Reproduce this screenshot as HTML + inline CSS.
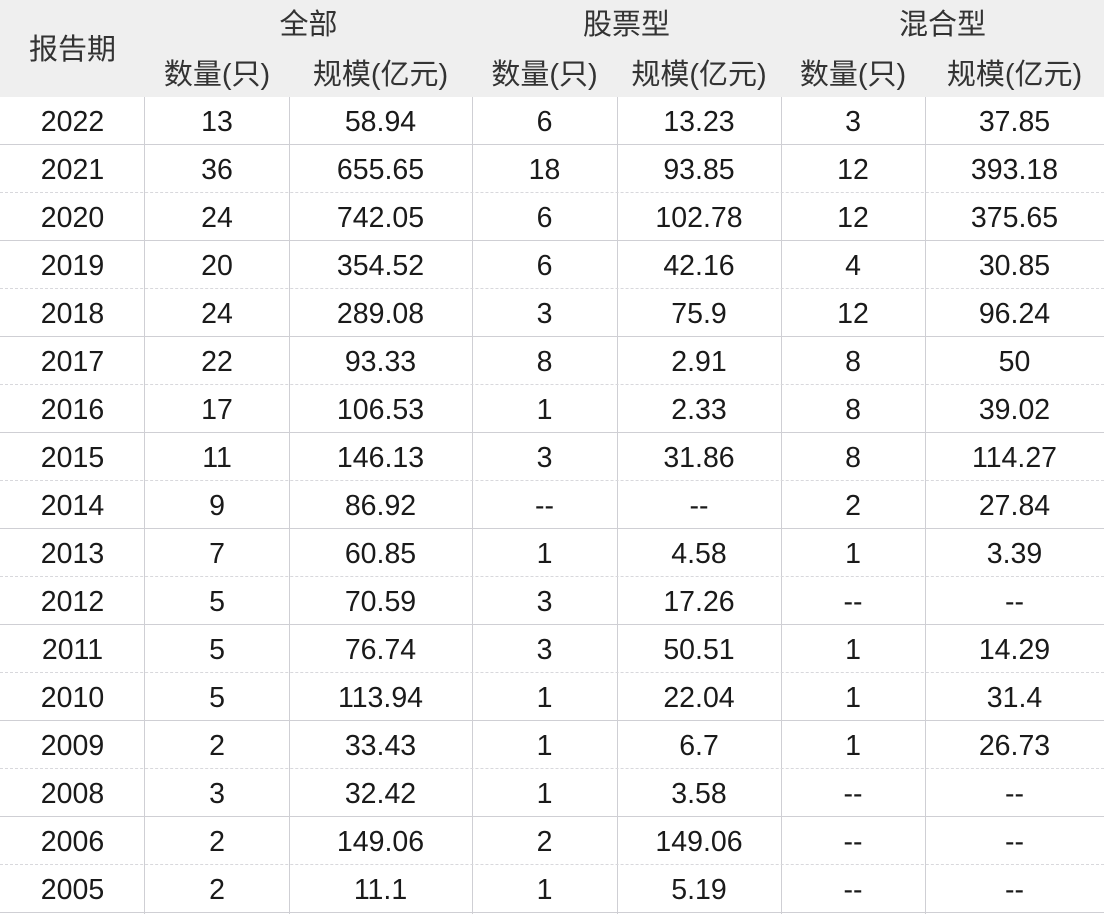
<!DOCTYPE html>
<html><head><meta charset="utf-8"><style>
body{margin:0;width:1104px;height:914px;overflow:hidden;background:#fff;font-family:"Liberation Sans","Noto Sans CJK SC",sans-serif;color:#1a1a1a}
.hdr{position:absolute;left:0;top:0;width:1104px;height:97px;background:#efefef}
.t{position:absolute;text-align:center;font-size:28.5px;line-height:48px;padding-top:1px}
.h{position:absolute;text-align:center;font-size:29px;line-height:40px;color:#333}
.vl{position:absolute;top:97px;width:1px;height:817px;background:#cfcfd4}
.hl{position:absolute;left:0;width:1104px;height:0;border-top:1px solid #cfcfd4}
.hl.d{border-top:1px dashed #d8d8dc}
</style></head><body>
<div class="hdr"></div>
<div class="h" style="left:0;width:145px;top:30px">报告期</div>
<div class="h" style="left:145px;width:327px;top:5px">全部</div>
<div class="h" style="left:472px;width:309px;top:5px">股票型</div>
<div class="h" style="left:781px;width:323px;top:5px">混合型</div>
<div class="h" style="left:145px;width:144px;top:55px">数量(只)</div>
<div class="h" style="left:289px;width:183px;top:55px">规模(亿元)</div>
<div class="h" style="left:472px;width:145px;top:55px">数量(只)</div>
<div class="h" style="left:617px;width:164px;top:55px">规模(亿元)</div>
<div class="h" style="left:781px;width:144px;top:55px">数量(只)</div>
<div class="h" style="left:925px;width:179px;top:55px">规模(亿元)</div>
<div class="vl" style="left:144px"></div><div class="vl" style="left:289px"></div><div class="vl" style="left:472px"></div><div class="vl" style="left:617px"></div><div class="vl" style="left:781px"></div><div class="vl" style="left:925px"></div>
<div id="rows"></div>
<script>
var d=[["2022","13","58.94","6","13.23","3","37.85"],["2021","36","655.65","18","93.85","12","393.18"],["2020","24","742.05","6","102.78","12","375.65"],["2019","20","354.52","6","42.16","4","30.85"],["2018","24","289.08","3","75.9","12","96.24"],["2017","22","93.33","8","2.91","8","50"],["2016","17","106.53","1","2.33","8","39.02"],["2015","11","146.13","3","31.86","8","114.27"],["2014","9","86.92","--","--","2","27.84"],["2013","7","60.85","1","4.58","1","3.39"],["2012","5","70.59","3","17.26","--","--"],["2011","5","76.74","3","50.51","1","14.29"],["2010","5","113.94","1","22.04","1","31.4"],["2009","2","33.43","1","6.7","1","26.73"],["2008","3","32.42","1","3.58","--","--"],["2006","2","149.06","2","149.06","--","--"],["2005","2","11.1","1","5.19","--","--"]];
var c=[[0,145],[145,144],[289,183],[472,145],[617,164],[781,144],[925,179]];
var h="";
d.forEach(function(r,i){var y=97+i*48;
r.forEach(function(v,j){h+='<div class="t" style="left:'+c[j][0]+'px;width:'+c[j][1]+'px;top:'+y+'px">'+v+'</div>';});
h+='<div class="hl'+(i%2==1?' d':'')+'" style="top:'+(y+47)+'px"></div>';});
document.getElementById("rows").innerHTML=h;
</script>
</body></html>
